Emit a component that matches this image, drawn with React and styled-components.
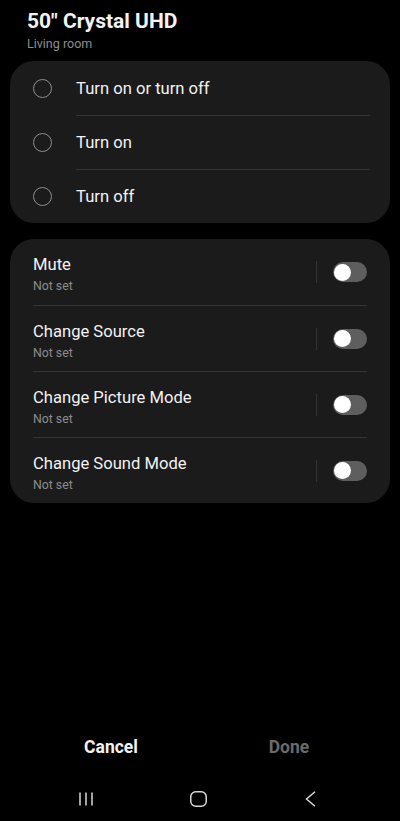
import React, { useState } from "react";
import styled, { createGlobalStyle } from "styled-components";

const COLORS = {
  page: "#000000",
  card: "#1b1b1c",
  text: "#f2f2f2",
  muted: "#8d8d8d",
  divider: "#343435",
  radio: "#8f8f8f",
  track: "#5e5e5f",
  disabled: "#6a6a6a",
  nav: "#d8d8d8",
};

const GlobalStyle = createGlobalStyle`
  html, body {
    margin: 0;
    padding: 0;
    background: ${COLORS.page};
  }
  body {
    font-family: Roboto, "Liberation Sans", sans-serif;
    color: ${COLORS.text};
  }
`;

const POWER_OPTIONS = ["Turn on or turn off", "Turn on", "Turn off"];
const ACTIONS = ["Mute", "Change Source", "Change Picture Mode", "Change Sound Mode"];

const App = () => {
  const [selected, setSelected] = useState(null);
  const [enabled, setEnabled] = useState({});

  return (
    <>
      <GlobalStyle />
      <Screen>
        <Header>
          <Title>50" Crystal UHD</Title>
          <Subtitle>Living room</Subtitle>
        </Header>

        <Card>
          {POWER_OPTIONS.map((label) => (
            <RadioRow key={label} onClick={() => setSelected(label)}>
              <Radio $checked={selected === label} />
              <RadioLabel>{label}</RadioLabel>
            </RadioRow>
          ))}
        </Card>

        <Card $spaced>
          {ACTIONS.map((label) => (
            <ActionRow key={label}>
              <ActionText>
                <ActionTitle>{label}</ActionTitle>
                <ActionValue>Not set</ActionValue>
              </ActionText>
              <Separator />
              <Toggle
                $on={!!enabled[label]}
                onClick={() => setEnabled((prev) => ({ ...prev, [label]: !prev[label] }))}
              />
            </ActionRow>
          ))}
        </Card>

        <Spacer />

        <ButtonBar>
          <TextButton>Cancel</TextButton>
          <TextButton $disabled>Done</TextButton>
        </ButtonBar>

        <NavBar>
          <NavIcon>
            <svg width="14" height="14" viewBox="0 0 14 14" fill="none" stroke={COLORS.nav} strokeWidth="1.5">
              <line x1="1" y1="0.5" x2="1" y2="13.5" />
              <line x1="7" y1="0.5" x2="7" y2="13.5" />
              <line x1="13" y1="0.5" x2="13" y2="13.5" />
            </svg>
          </NavIcon>
          <NavIcon>
            <svg width="17" height="16" viewBox="0 0 17 16" fill="none" stroke={COLORS.nav} strokeWidth="1.5">
              <rect x="0.75" y="0.75" width="15.5" height="14.5" rx="5" />
            </svg>
          </NavIcon>
          <NavIcon>
            <svg width="11" height="16" viewBox="0 0 11 16" fill="none" stroke={COLORS.nav} strokeWidth="1.5">
              <polyline points="10,0.75 1.5,8 10,15.25" />
            </svg>
          </NavIcon>
        </NavBar>
      </Screen>
    </>
  );
};

const Screen = styled.div`
  display: flex;
  flex-direction: column;
  width: 400px;
  height: 821px;
  background: ${COLORS.page};
`;

const Header = styled.header`
  padding: 9px 27px 0;
  margin-bottom: 9px;
`;

const Title = styled.h1`
  margin: 0;
  font-size: 21px;
  line-height: 24px;
  font-weight: 700;
  color: ${COLORS.text};
`;

const Subtitle = styled.div`
  font-size: 12.5px;
  line-height: 16px;
  color: ${COLORS.muted};
  margin-top: 3px;
`;

const Card = styled.section`
  margin: ${(p) => (p.$spaced ? "16px" : "0")} 10px 0;
  background: ${COLORS.card};
  border-radius: 24px;
  overflow: hidden;
`;

const RadioRow = styled.div`
  display: flex;
  align-items: center;
  height: 54px;
  padding-left: 23px;
  cursor: pointer;

  & + & > span:last-child {
    border-top: 1px solid ${COLORS.divider};
  }
`;

const Radio = styled.span`
  flex: none;
  box-sizing: border-box;
  width: 19px;
  height: 19px;
  border-radius: 50%;
  border: 1.6px solid ${(p) => (p.$checked ? "#3e91ff" : COLORS.radio)};
  margin-right: 24px;
`;

const RadioLabel = styled.span`
  flex: 1;
  align-self: stretch;
  display: flex;
  align-items: center;
  margin-right: 20px;
  font-size: 16.6px;
  color: ${COLORS.text};
`;

const ActionRow = styled.div`
  display: flex;
  align-items: center;
  height: 66px;
  margin: 0 23px;
  box-sizing: border-box;

  & + & {
    border-top: 1px solid ${COLORS.divider};
  }
`;

const ActionText = styled.div`
  flex: 1;
  align-self: flex-start;
  padding-top: 15px;
`;

const ActionTitle = styled.div`
  font-size: 16.6px;
  line-height: 21px;
  color: ${COLORS.text};
`;

const ActionValue = styled.div`
  font-size: 12.3px;
  line-height: 16px;
  margin-top: 3px;
  color: ${COLORS.muted};
`;

const Separator = styled.span`
  width: 1px;
  height: 22px;
  background: ${COLORS.divider};
  margin-right: 16px;
`;

const Toggle = styled.button`
  position: relative;
  width: 34px;
  height: 20px;
  padding: 0;
  border: none;
  border-radius: 10px;
  background: ${(p) => (p.$on ? "#3e91ff" : COLORS.track)};
  cursor: pointer;

  &::after {
    content: "";
    position: absolute;
    top: 1.5px;
    left: ${(p) => (p.$on ? "16px" : "1px")};
    width: 17px;
    height: 17px;
    border-radius: 50%;
    background: #ffffff;
  }
`;

const Spacer = styled.div`
  flex: 1;
`;

const ButtonBar = styled.div`
  display: grid;
  grid-template-columns: 1fr 1fr;
  height: 48px;
  padding: 0 22px;
`;

const TextButton = styled.button`
  border: none;
  background: none;
  font-family: Roboto, "Liberation Sans", sans-serif;
  font-size: 17.5px;
  font-weight: 700;
  color: ${(p) => (p.$disabled ? COLORS.disabled : COLORS.text)};
  cursor: ${(p) => (p.$disabled ? "default" : "pointer")};
`;

const NavBar = styled.nav`
  display: grid;
  grid-template-columns: repeat(3, 112px);
  justify-content: center;
  height: 44px;
  padding: 6px 4px 0 0;
`;

const NavIcon = styled.div`
  display: flex;
  align-items: center;
  justify-content: center;
`;

export default App;
